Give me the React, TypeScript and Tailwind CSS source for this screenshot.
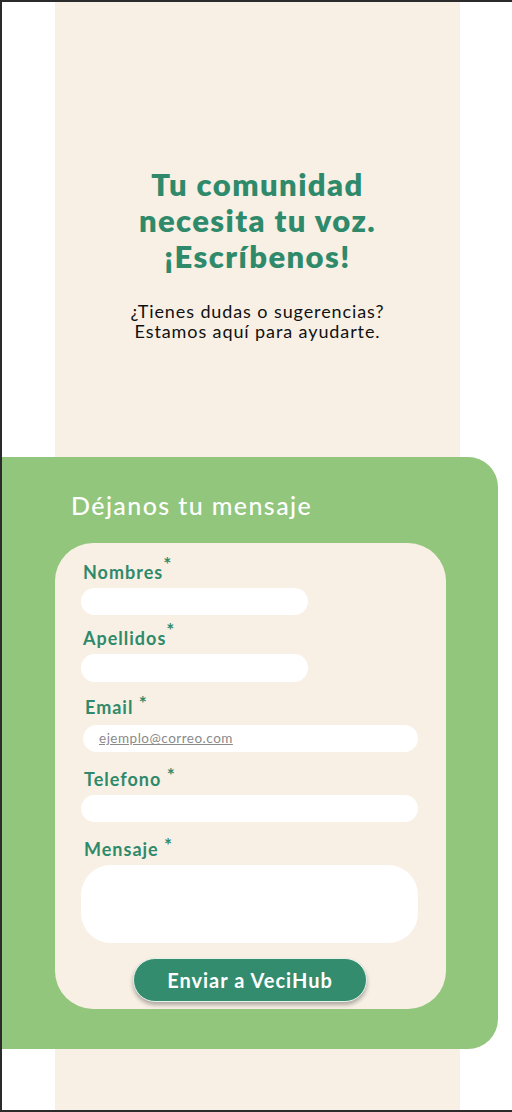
import React from 'react';

const font = { fontFamily: 'Lato, "Open Sans", sans-serif' };

const Label: React.FC<{ text: string; spaced?: boolean; className?: string }> = ({ text, spaced, className }) => (
  <label className={`block h-[22px] text-[18px] leading-[22px] font-bold tracking-[1px] text-[#2f8a6b] ${className ?? ''}`}>
    {text}
    {spaced ? ' ' : ''}
    <span className={`relative text-[19px] leading-none ${spaced ? '-top-[4px]' : '-top-[8px]'}`}>*</span>
  </label>
);

const inputBase = 'block bg-white rounded-full outline-none border-0';

export default function App() {
  return (
    <div className="w-[512px] h-[1112px] bg-white border-t-2 border-l-2 border-b-2 border-[#2b2b2b] overflow-hidden" style={font}>
      <div className="ml-[53px] w-[405px] h-full bg-[#f8f0e5] pt-[164px]">
        <h1 className="text-center text-[31px] leading-[36px] font-extrabold text-[#2f8a6b] tracking-[1.4px]">
          Tu comunidad
          <br />
          necesita tu voz.
          <br />
          ¡Escríbenos!
        </h1>
        <p className="mt-[27px] text-center text-[18px] leading-[20px] tracking-[0.9px] text-[#111]">
          ¿Tienes dudas o sugerencias?
          <br />
          Estamos aquí para ayudarte.
        </p>

        <section className="mt-[116px] -ml-[53px] w-[496px] bg-[#91c67c] rounded-r-[30px] pt-[32px] pb-[40px]">
          <h2 className="pl-[69px] text-[25px] leading-[32px] font-medium tracking-[1.4px] text-white">Déjanos tu mensaje</h2>
          <form className="mt-[22px] ml-[53px] w-[391px] bg-[#f8f0e5] rounded-[38px] pt-[18px] pb-[7px] pl-[26px]">
            <Label text="Nombres" className="ml-[2px]" />
            <input className={`${inputBase} mt-[5px] w-[227px] h-[27px]`} />
            <Label text="Apellidos" className="ml-[2px] mt-[12px]" />
            <input className={`${inputBase} mt-[5px] w-[227px] h-[28px]`} />
            <Label text="Email" spaced className="ml-[4px] mt-[14px]" />
            <div className={`${inputBase} mt-[7px] ml-[2px] w-[335px] h-[27px] flex items-center pl-[16px]`}>
              <span className="text-[13.5px] tracking-[0.5px] text-[#8a8a8a] underline">ejemplo@correo.com</span>
            </div>
            <Label text="Telefono" spaced className="ml-[3px] mt-[16px]" />
            <input className={`${inputBase} mt-[5px] w-[337px] h-[27px]`} />
            <Label text="Mensaje" spaced className="ml-[3px] mt-[16px]" />
            <textarea className="block mt-[5px] w-[337px] h-[78px] bg-white rounded-[30px] outline-none border-0 resize-none" />
            <div className="mt-[15px] pl-[52px]">
              <button
                type="button"
                className="w-[234px] h-[44px] rounded-full bg-[#338c6e] border border-[#e8f2ec] text-white text-[20px] font-bold tracking-[1px] shadow-[0_3px_4px_rgba(0,0,0,0.3)]"
              >
                Enviar a VeciHub
              </button>
            </div>
          </form>
        </section>
      </div>
    </div>
  );
}
